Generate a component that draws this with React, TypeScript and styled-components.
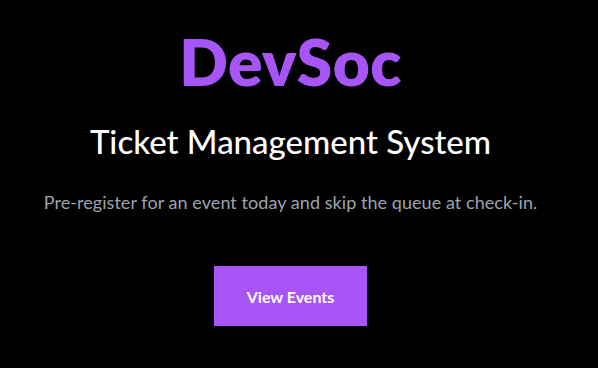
import React from "react";
import styled, { createGlobalStyle } from "styled-components";

const Global = createGlobalStyle`
  html, body { margin: 0; padding: 0; background: #000; }
  body { font-family: Lato, "Noto Sans", sans-serif; }
`;

const Page = styled.main`
  width: 598px;
  height: 368px;
  background: #000;
  display: flex;
  flex-direction: column;
  align-items: center;
  padding: 30px 17px 0 0;
  box-sizing: border-box;
`;

const Brand = styled.h1`
  margin: 0;
  font-size: 64px;
  line-height: 1;
  font-weight: 800;
  letter-spacing: 0.4px;
  color: #a855f7;
`;

const Heading = styled.h2`
  margin: 31px 0 0;
  font-size: 33px;
  line-height: 1;
  font-weight: 500;
  color: #fff;
`;

const Tagline = styled.p`
  margin: 35px 0 0;
  font-size: 18px;
  line-height: 1;
  letter-spacing: 0.06px;
  color: #9ca3af;
`;

const Button = styled.button`
  margin-top: 55px;
  width: 153px;
  height: 60px;
  border: none;
  background: #a855f7;
  color: #fff;
  font-family: inherit;
  font-size: 16px;
  font-weight: 700;
  cursor: pointer;
  display: flex;
  align-items: center;
  justify-content: center;
`;

export default function App() {
  return (
    <>
      <Global />
      <Page>
        <Brand>DevSoc</Brand>
        <Heading>Ticket Management System</Heading>
        <Tagline>Pre-register for an event today and skip the queue at check-in.</Tagline>
        <Button>View Events</Button>
      </Page>
    </>
  );
}
